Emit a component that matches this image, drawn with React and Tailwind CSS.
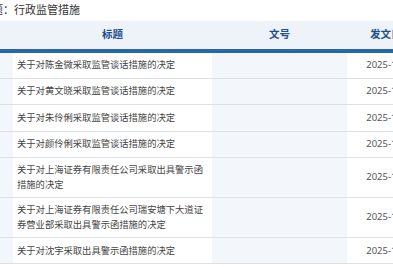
import React from 'react'

const rows = [
  { title: '关于对陈金微采取监管谈话措施的决定', no: '', date: '2025-12-05', tall: false },
  { title: '关于对黄文晓采取监管谈话措施的决定', no: '', date: '2025-12-05', tall: false },
  { title: '关于对朱伶俐采取监管谈话措施的决定', no: '', date: '2025-12-05', tall: false },
  { title: '关于对颜伶俐采取监管谈话措施的决定', no: '', date: '2025-12-05', tall: false },
  { title: '关于对上海证券有限责任公司采取出具警示函措施的决定', no: '', date: '2025-12-03', tall: true },
  { title: '关于对上海证券有限责任公司瑞安塘下大道证券营业部采取出具警示函措施的决定', no: '', date: '2025-12-03', tall: true },
  { title: '关于对沈宇采取出具警示函措施的决定', no: '', date: '2025-12-01', tall: false },
]

const font = { fontFamily: '"Noto Sans", "Noto Sans CJK SC", sans-serif' }

export default function App() {
  return (
    <div className="w-[393px] h-[267px] overflow-hidden bg-white" style={font}>
      <div className="h-[21px] leading-[20px] text-[11px] text-[#333] whitespace-nowrap -ml-[8px]">
        题：行政监管措施
      </div>
      <div className="w-[435px]">
        <div className="grid grid-cols-[13px_199px_135px_88px] h-[28px] items-center bg-[#eef3f9] text-[10.5px] font-bold text-[#1d4f8c]">
          <div />
          <div className="text-center">标题</div>
          <div className="text-center">文号</div>
          <div className="text-center">发文日期</div>
        </div>
        <div className="h-[3.5px] bg-[#2767a8]" />
        {rows.map((row, idx) => (
          <div
            key={idx}
            className={`grid grid-cols-[13px_199px_135px_88px] border-b border-[#dde1e6] text-[9.3px] text-[#444] ${row.tall ? 'h-[40px]' : 'h-[26.4px]'}`}
          >
            <div className="bg-[#f3f6fa]" />
            <div className="flex items-center pl-[4px] pr-[5px] leading-[14.5px]">{row.title}</div>
            <div className="bg-[#f3f6fa] flex items-center justify-center">{row.no}</div>
            <div className="flex items-center justify-center text-[#555] text-[9.5px]">{row.date}</div>
          </div>
        ))}
      </div>
    </div>
  )
}
